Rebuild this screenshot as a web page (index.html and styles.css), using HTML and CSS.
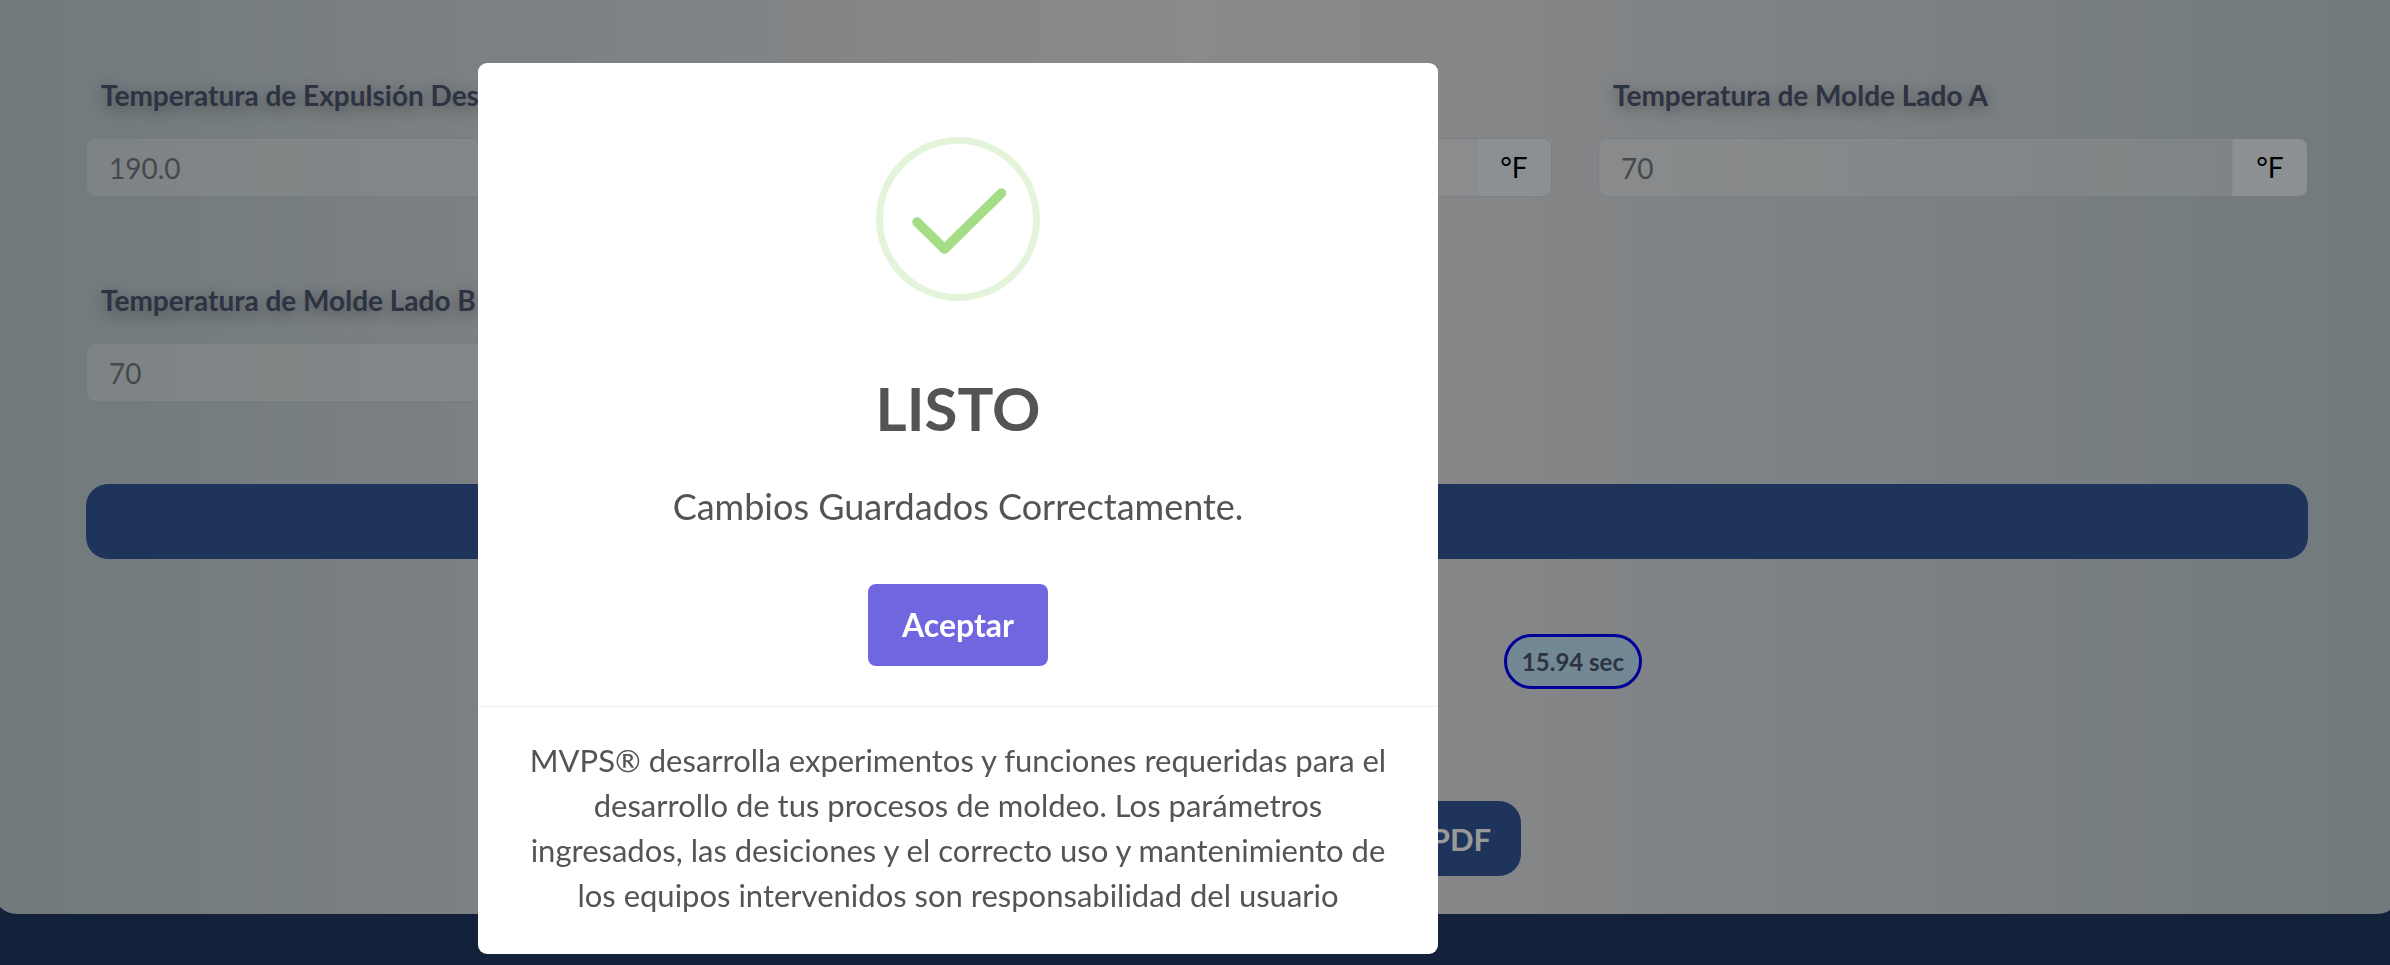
FILE: index.html
```html
<!DOCTYPE html>
<html lang="es">

<head>
    <meta charset="UTF-8">
    <meta name="viewport" content="width=device-width, initial-scale=1.0">
    <title>MVPS</title>
    <link rel="stylesheet" href="styles.css">
</head>

<body>
    <main class="panel">
        <form class="fields">
            <div class="field">
                <label for="temp-expulsion">Temperatura de Expulsión Des</label>
                <div class="input-group">
                    <input type="text" id="temp-expulsion" placeholder="190.0">
                </div>
            </div>
            <div class="field">
                <div class="input-group">
                    <input type="text" id="temp-real" aria-label="Temperatura">
                    <span class="unit">°F</span>
                </div>
            </div>
            <div class="field">
                <label for="molde-a">Temperatura de Molde Lado A</label>
                <div class="input-group">
                    <input type="text" id="molde-a" placeholder="70">
                    <span class="unit">°F</span>
                </div>
            </div>
            <div class="field">
                <label for="molde-b">Temperatura de Molde Lado B</label>
                <div class="input-group">
                    <input type="text" id="molde-b" placeholder="70">
                </div>
            </div>
        </form>

        <div class="section-bar"></div>

        <div class="results">
            <span class="pill">15.94 sec</span>
        </div>

        <div class="actions">
            <button type="button" class="pdf-btn">PDF</button>
        </div>
    </main>

    <!-- modal -->
    <div class="overlay">
        <div class="modal" role="dialog" aria-modal="true" aria-labelledby="modal-title">
            <svg class="modal-icon" viewBox="0 0 164 164" fill="none">
                <circle cx="82" cy="82" r="78.5" stroke="#a5dc86" stroke-opacity=".3" stroke-width="7" />
                <path d="M41 85 L68.5 112 L125.5 56" stroke="#a5dc86" stroke-width="9.5" stroke-linecap="round"
                    stroke-linejoin="round" />
            </svg>
            <h2 class="modal-title" id="modal-title">LISTO</h2>
            <p class="modal-text">Cambios Guardados Correctamente.</p>
            <button type="button" class="accept-btn">Aceptar</button>
            <p class="modal-footer">MVPS® desarrolla experimentos y funciones requeridas para el desarrollo de tus
                procesos de moldeo. Los parámetros ingresados, las desiciones y el correcto uso y mantenimiento de los
                equipos intervenidos son responsabilidad del usuario</p>
        </div>
    </div>
</body>

</html>
```
FILE: styles.css
```css
* {
    margin: 0;
    padding: 0;
    box-sizing: border-box;
}

body {
    min-height: 100vh;
    background-color: #203763;
    font-family: Lato, "Liberation Sans", sans-serif;
    font-size: 28px;
    overflow: hidden;
}

input,
button {
    font: inherit;
    border: none;
}

.panel {
    /* the panel is a little wider than the window */
    margin: 0 -11px 0 -7px;
    padding: 75px 93px 38px;
    border-radius: 0 0 24px 24px;
    background: linear-gradient(to right, #bccbd0, #e8e6e8, #bccbd0);
}

.fields {
    display: grid;
    grid-template-columns: repeat(3, 1fr);
    column-gap: 46px;
    row-gap: 83px;
}

.field {
    display: flex;
    flex-direction: column;
    justify-content: flex-end;
    gap: 23px;
}

.field label {
    padding-left: 15px;
    line-height: 40px;
    font-weight: 700;
    color: #4b556e;
    text-shadow: 0 4px 16px rgba(0, 0, 0, .4);
}

.input-group {
    display: flex;
    height: 59px;
    border: 1px solid rgba(190, 205, 210, .4);
    border-radius: 9px;
    overflow: hidden;
}

.input-group input {
    flex: 1;
    min-width: 0;
    padding: 0 22px;
    background-color: rgba(255, 255, 255, .3);
    color: #757b7e;
}

.input-group input::placeholder {
    color: #757b7e;
    opacity: 1;
}

.unit {
    width: 75px;
    line-height: 57px;
    text-align: center;
    border-left: 1px solid #dfe5e8;
    background-color: #eaf1f4;
    color: #000;
}

.section-bar {
    height: 75px;
    margin-top: 82px;
    border-radius: 22px;
    background-color: #355798;
}

.results {
    display: flex;
    justify-content: flex-end;
    width: 890px;
    margin: 75px auto 0;
}

.pill {
    padding: 0 15px;
    line-height: 49px;
    border: 3px solid #00f;
    border-radius: 28px;
    background-color: #bfe3f7;
    color: #4b556e;
    font-size: 24px;
    font-weight: 700;
}

.actions {
    display: flex;
    justify-content: center;
    margin-top: 112px;
}

.pdf-btn {
    width: 648px;
    height: 75px;
    padding: 0 30px;
    text-align: right;
    border-radius: 22px;
    background-color: #355798;
    color: #fff;
    font-size: 31px;
    font-weight: 700;
}

.overlay {
    position: fixed;
    inset: 0;
    padding: 63px 20% 0;
    background-color: rgba(0, 0, 0, .4);
}

.modal {
    display: flex;
    flex-direction: column;
    align-items: center;
    width: 960px;
    max-width: 100%;
    padding-top: 74px;
    border-radius: 9px;
    background-color: #fff;
    color: #545454;
    text-align: center;
}

.modal-icon {
    width: 164px;
    height: 164px;
}

.modal-title {
    margin-top: 72px;
    line-height: 70px;
    font-size: 60px;
    font-weight: 700;
}

.modal-text {
    margin-top: 36px;
    line-height: 54px;
    font-size: 36px;
}

.accept-btn {
    margin: 51px 0 40px;
    padding: 0 34px;
    line-height: 82px;
    border-radius: 8px;
    background-color: #7066e0;
    color: #fff;
    font-size: 32px;
    font-weight: 700;
}

.modal-footer {
    width: 100%;
    padding: 31px 48px 36px;
    border-top: 1px solid #eee;
    line-height: 45px;
    font-size: 31px;
}
```
